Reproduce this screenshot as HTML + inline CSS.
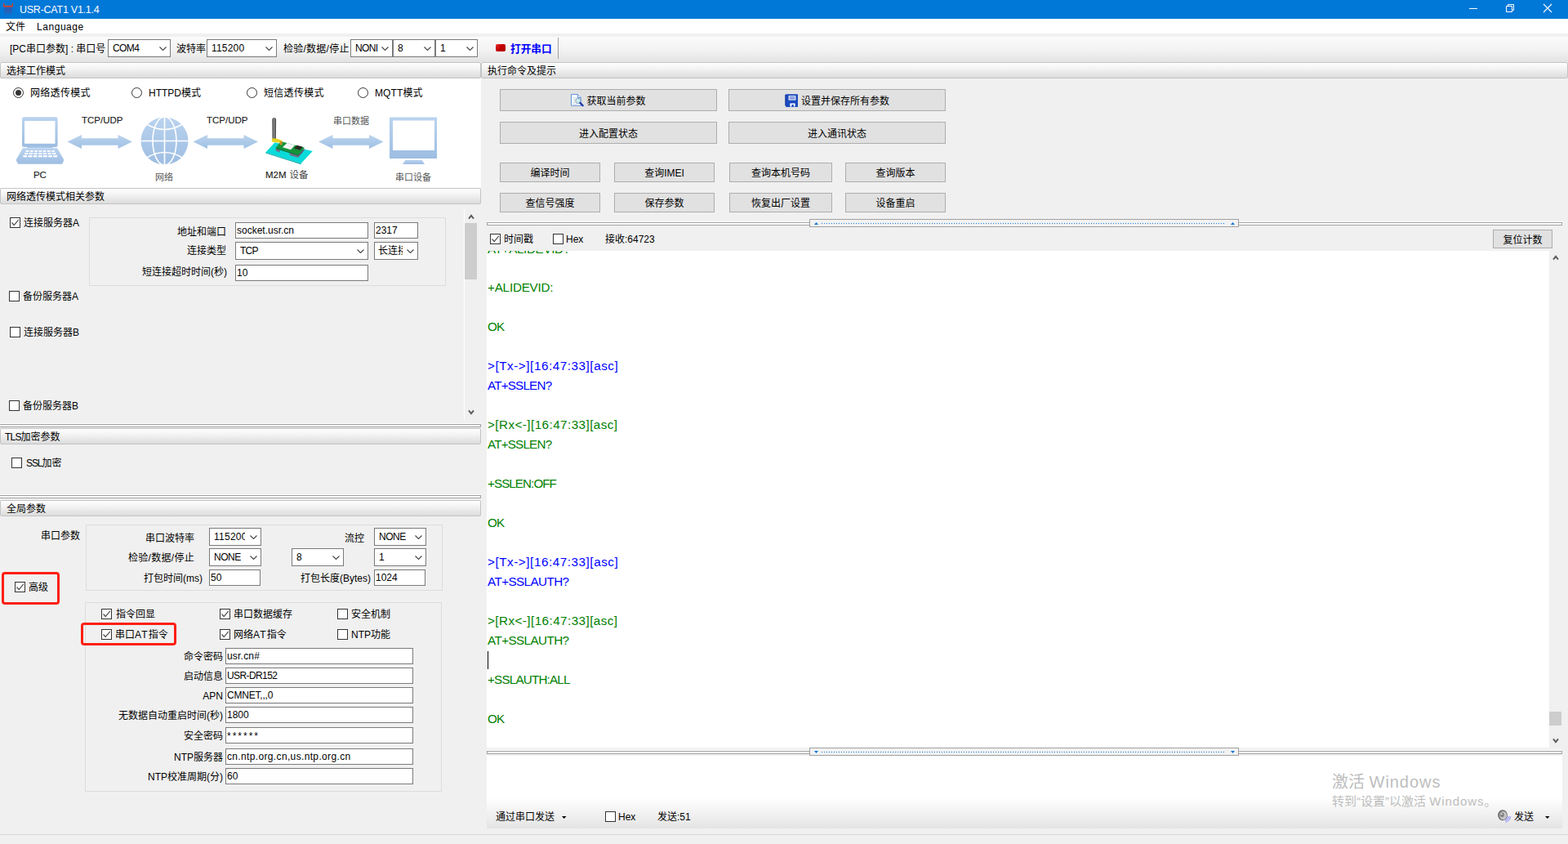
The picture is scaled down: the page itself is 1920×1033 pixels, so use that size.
<!DOCTYPE html>
<html><head><meta charset="utf-8">
<style>
*{box-sizing:border-box}
html,body{margin:0;padding:0}
body{width:1920px;height:1033px;background:#f0f0f0;position:relative;overflow:hidden;font:12px/14px "Liberation Sans","Noto Sans CJK SC",sans-serif;color:#000}
.a{position:absolute;white-space:nowrap}
.hdr{position:absolute;height:20px;border:1px solid #c4c4c4;border-radius:2px;background:linear-gradient(#fefefe,#f3f3f3 40%,#dcdcdc);padding:3px 0 0 7px;line-height:14px}
.inp{position:absolute;background:#fff;border:1px solid #7a7a7a;height:20px;line-height:19px;padding-left:1px;white-space:nowrap;overflow:hidden}
.sel{position:absolute;background:#fff;border:1px solid #7a7a7a;height:22px;line-height:21px;padding-left:5px;white-space:nowrap;overflow:hidden}
.sel svg.v{position:absolute;right:4px;top:8px}
.cb{position:absolute;width:13px;height:13px;border:1px solid #333;background:#fff}
.cb svg{position:absolute;left:0;top:0}
.rd{position:absolute;width:13px;height:13px;border:1px solid #333;border-radius:50%;background:#fff}
.rd.on:after{content:"";position:absolute;left:2px;top:2px;width:7px;height:7px;border-radius:50%;background:#333}
.btn{position:absolute;background:#e1e1e1;border:1px solid #adadad;text-align:center;white-space:nowrap}
.gb{position:absolute;border:1px solid #dcdcdc}
.lr{position:absolute;text-align:right;white-space:nowrap}
.red{position:absolute;border:3px solid #ff1f12;border-radius:4px}
.log{position:absolute;left:597px;font:15.2px/24px "Liberation Sans",sans-serif;white-space:nowrap;letter-spacing:0.1px}
.g{color:#008000}.b{color:#0000ff}
.spl{position:absolute;height:4px;border:1px solid #a0a0a0;border-left:none;background:#fff;box-shadow:0 -1px 0 #fff}
</style></head><body>

<!-- TITLE -->
<div class="a" id="title" style="left:0;top:0;width:1920px;height:23px;background:#0078d7">
<svg class="a" style="left:3px;top:3px" width="15" height="16" viewBox="3 3 15 16"><path d="M4 4 H5.4 V6.8 H14.7 V4 H16 V7.5 Q16 8.8 14.7 8.8 H5.4 Q4 8.8 4 7.5 Z" fill="#c8452f"/><path d="M4.8 9.2 H15.2 L14.2 17.5 H12.6 V13.8 H11 V17.5 H9 V13.8 H7.6 V17.5 H6 Z" fill="#2a5db5"/></svg>
<div class="a" style="left:24px;top:5px;color:#fff;font-size:12.5px;line-height:15px;letter-spacing:-0.25px">USR-CAT1 V1.1.4</div>
<svg class="a" style="left:1798px;top:4px" width="110" height="14" viewBox="0 0 110 14"><path d="M1 6.5 H11" stroke="#fff" stroke-width="1"/><path d="M46.5 3.5 H53.5 V10.5 H46.5 Z M48.5 3.5 V1.5 H55.5 V8.5 H53.5" fill="none" stroke="#fff" stroke-width="1"/><path d="M92 1 L102 11 M102 1 L92 11" stroke="#fff" stroke-width="1.1"/></svg>
</div>
<!-- MENU -->
<div class="a" id="menu" style="left:0;top:23px;width:1920px;height:18px;background:#fff">
<div class="a" style="left:7px;top:3px">文件</div><div class="a" style="left:45px;top:3px;letter-spacing:0.55px">Language</div></div>
<!-- TOOLBAR -->
<div class="a" id="tb" style="left:0;top:45px;width:1920px;height:31px;background:linear-gradient(#fbfbfb,#f3f3f3 50%,#e3e3e3)">
<div class="a" style="left:12px;top:8px">[PC串口参数] : 串口号</div>
<div class="sel" style="left:132px;top:3px;width:77px;letter-spacing:-0.6px">COM4<svg class="v" width="9" height="5" viewBox="0 0 9 5"><path d="M0.5 0.5 L4.5 4.5 L8.5 0.5" fill="none" stroke="#444" stroke-width="1.1"/></svg></div>
<div class="a" style="left:216px;top:8px">波特率</div>
<div class="sel" style="left:253px;top:3px;width:86px;letter-spacing:0.2px">115200<svg class="v" width="9" height="5" viewBox="0 0 9 5"><path d="M0.5 0.5 L4.5 4.5 L8.5 0.5" fill="none" stroke="#444" stroke-width="1.1"/></svg></div>
<div class="a" style="left:347px;top:8px;letter-spacing:0.25px">检验/数据/停止</div>
<div class="sel" style="left:429px;top:3px;width:52px;letter-spacing:-0.6px">NONI<svg class="v" width="9" height="5" viewBox="0 0 9 5"><path d="M0.5 0.5 L4.5 4.5 L8.5 0.5" fill="none" stroke="#444" stroke-width="1.1"/></svg></div>
<div class="sel" style="left:481px;top:3px;width:52px">8<svg class="v" width="9" height="5" viewBox="0 0 9 5"><path d="M0.5 0.5 L4.5 4.5 L8.5 0.5" fill="none" stroke="#444" stroke-width="1.1"/></svg></div>
<div class="sel" style="left:533px;top:3px;width:52px">1<svg class="v" width="9" height="5" viewBox="0 0 9 5"><path d="M0.5 0.5 L4.5 4.5 L8.5 0.5" fill="none" stroke="#444" stroke-width="1.1"/></svg></div>
<div class="a" style="left:607px;top:9px;width:12px;height:9px;border-radius:2px;background:linear-gradient(135deg,#e83030,#c00000 50%,#b00000)"></div>
<div class="a bd" style="left:625px;top:8px;color:#0000ff;font-weight:bold;font-size:12.7px">打开串口</div>
<div class="a" style="left:683px;top:1px;width:1px;height:26px;background:#a0a0a0"></div>
</div>
<!-- LEFT -->
<div id="left">
<div class="hdr" style="left:0;top:76px;width:589px">选择工作模式</div>
<div class="a" style="left:0;top:96px;width:589px;height:134px;background:#fff"></div>
<div class="rd on" style="left:16px;top:107px"></div><div class="a" style="left:37px;top:107px;letter-spacing:0.3px">网络透传模式</div>
<div class="rd" style="left:161px;top:107px"></div><div class="a" style="left:182px;top:107px;letter-spacing:0px">HTTPD模式</div>
<div class="rd" style="left:302px;top:107px"></div><div class="a" style="left:323px;top:107px;letter-spacing:0.3px">短信透传模式</div>
<div class="rd" style="left:438px;top:107px"></div><div class="a" style="left:459px;top:107px;letter-spacing:0.1px">MQTT模式</div>
<svg class="a" id="dia" style="left:0;top:136px" width="589" height="94" viewBox="0 136 589 94"><defs><linearGradient id="ag" x1="0" y1="0" x2="0" y2="1"><stop offset="0" stop-color="#bcd4ee"/><stop offset="1" stop-color="#9fc0e4"/></linearGradient><linearGradient id="bg" x1="0" y1="0" x2="0" y2="1"><stop offset="0" stop-color="#bad3ef"/><stop offset="1" stop-color="#9dbde2"/></linearGradient></defs><path fill="url(#bg)" d="M29.5 143.3 H68.1 Q70.6 143.3 70.6 145.8 V177.4 Q70.6 179.9 68.1 179.9 H29.5 Q27 179.9 27 177.4 V145.8 Q27 143.3 29.5 143.3 Z"/><rect x="30" y="148" width="37.5" height="27.8" fill="#fff"/><path fill="url(#bg)" d="M33 179.9 H65 V181.2 H33 Z"/><path fill="url(#bg)" d="M27.9 181.2 H70.1 L78 195.1 V197 L76.2 200.8 H22.2 L20 197 V195.1 Z"/><rect x="31.5" y="184.2" width="3.8" height="1.8" fill="#fff"/><rect x="36.8" y="184.2" width="3.8" height="1.8" fill="#fff"/><rect x="42.1" y="184.2" width="3.8" height="1.8" fill="#fff"/><rect x="47.4" y="184.2" width="3.8" height="1.8" fill="#fff"/><rect x="52.6" y="184.2" width="3.8" height="1.8" fill="#fff"/><rect x="57.9" y="184.2" width="3.8" height="1.8" fill="#fff"/><rect x="63.2" y="184.2" width="3.8" height="1.8" fill="#fff"/><rect x="30.1" y="187.0" width="4.2" height="2.0" fill="#fff"/><rect x="35.8" y="187.0" width="4.2" height="2.0" fill="#fff"/><rect x="41.4" y="187.0" width="4.2" height="2.0" fill="#fff"/><rect x="47.1" y="187.0" width="4.2" height="2.0" fill="#fff"/><rect x="52.8" y="187.0" width="4.2" height="2.0" fill="#fff"/><rect x="58.5" y="187.0" width="4.2" height="2.0" fill="#fff"/><rect x="64.1" y="187.0" width="4.2" height="2.0" fill="#fff"/><rect x="28.4" y="190.0" width="4.7" height="2.4" fill="#fff"/><rect x="34.6" y="190.0" width="4.7" height="2.4" fill="#fff"/><rect x="40.7" y="190.0" width="4.7" height="2.4" fill="#fff"/><rect x="46.9" y="190.0" width="4.7" height="2.4" fill="#fff"/><rect x="53.0" y="190.0" width="4.7" height="2.4" fill="#fff"/><rect x="59.2" y="190.0" width="4.7" height="2.4" fill="#fff"/><rect x="65.3" y="190.0" width="4.7" height="2.4" fill="#fff"/><path fill="url(#ag)" d="M82.5 173.5 L100 165 L100 169.3 L144.5 169.3 L144.5 165 L162 173.5 L144.5 182 L144.5 177.7 L100 177.7 L100 182 Z"/><path fill="url(#ag)" d="M236.5 173.5 L254 165 L254 169.3 L298.5 169.3 L298.5 165 L316 173.5 L298.5 182 L298.5 177.7 L254 177.7 L254 182 Z"/><path fill="url(#ag)" d="M390 173.5 L407.5 165 L407.5 169.3 L452 169.3 L452 165 L469.5 173.5 L452 182 L452 177.7 L407.5 177.7 L407.5 182 Z"/><circle cx="201.5" cy="172.5" r="29" fill="url(#bg)"/><g fill="none" stroke="#fff" stroke-width="1.6"><path d="M201.5 143.5 V201.5 M172.5 172.5 H230.5"/><ellipse cx="201.5" cy="172.5" rx="14.5" ry="29.5"/><path d="M180.5 152.5 Q201.5 164.5 222.5 152.5 M180.5 192.5 Q201.5 180.5 222.5 192.5"/></g><defs><linearGradient id="an" x1="0" y1="0" x2="1" y2="0"><stop offset="0" stop-color="#444"/><stop offset="0.5" stop-color="#8a8a8a"/><stop offset="1" stop-color="#3c3c3c"/></linearGradient></defs><path d="M325.3 186.4 L336.5 174.2 L382.8 185.1 L368.6 200 Z" fill="#0adada"/><path d="M325.3 186.4 L368.6 200 L368.6 201.2 L325.3 187.6 Z" fill="#08a8a8"/><path d="M337.8 181 L342.7 182.6 L342.7 186.4 L337.8 184.8 Z" fill="#70708c"/><path d="M354.7 186.6 L364.9 189.6 L364.9 193 L354.7 190 Z" fill="#70708c"/><path d="M364.9 189.6 L372.5 181.5 L372.5 184 L364.9 193 Z" fill="#5a5a78"/><path d="M337.8 180.7 L343.8 172.9 L373 180.7 L365.1 189.4 Z" fill="#14943a"/><path d="M337.8 180.7 L365.1 189.4 L365.1 190.6 L337.8 181.9 Z" fill="#0c6a28"/><path d="M345.9 180.3 L351.6 175 L361.2 177.7 L356 183.3 Z" fill="#f6f6f6"/><path d="M359.9 181.6 L363.8 177.7 L370.8 179.8 L367.3 183.75 Z" fill="#2a2a22"/><path d="M333.3 146 Q333.3 144 335.7 144 Q338.1 144 338.1 146 L337.9 171.5 L333.5 171.5 Z" fill="url(#an)"/><path d="M332.9 169.6 L338.5 169.6 L345.5 172 L345.5 174.4 L338 174.2 L332.9 173.6 Z" fill="#e6d422"/><rect x="342.7" y="173" width="2.8" height="4.4" fill="#d08a28"/><rect x="477" y="143.5" width="58" height="50.5" fill="url(#bg)"/><rect x="481" y="147.5" width="51" height="36.5" fill="#fff"/><path d="M496.5 195.8 H516.5 L520 201 H493 Z" fill="url(#bg)"/><g font-family="Liberation Sans, sans-serif" fill="#1a1a1a" stroke="#1a1a1a" stroke-width="0.12" font-size="11.5"><text x="100" y="150.8">TCP/UDP</text><text x="253" y="150.8">TCP/UDP</text><text x="40.9" y="218">PC</text><text x="325" y="217.7">M2M</text></g><g font-family="'Liberation Sans', 'Noto Sans CJK SC', sans-serif" fill="#555" font-size="11"><text x="408" y="151.8">串口数据</text><text x="190" y="220.8">网络</text><text x="354.5" y="217.9" font-size="11.5" fill="#444">设备</text><text x="484" y="220.8">串口设备</text></g></svg>
<div class="hdr" style="left:0;top:230px;width:589px">网络透传模式相关参数</div>
<div class="cb" style="left:12px;top:266px"><svg width="11" height="11" viewBox="0 0 11 11"><path d="M1.5 5.5 L4.2 8.5 L9.8 1.8" fill="none" stroke="#4a4a4a" stroke-width="1.15"/></svg></div><div class="a" style="left:29px;top:266px">连接服务器A</div>

<div class="gb" style="left:109px;top:266px;width:437px;height:84px"></div>
<div class="lr" style="left:150px;width:127px;top:277px">地址和端口</div>
<div class="lr" style="left:150px;width:127px;top:300px">连接类型</div>
<div class="lr" style="left:150px;width:128px;top:326px">短连接超时时间(秒)</div>
<div class="inp" style="left:288px;top:272px;width:163px">socket.usr.cn</div>
<div class="inp" style="left:458px;top:272px;width:54px">2317</div>
<div class="sel" style="left:288px;top:296px;width:163px;letter-spacing:-0.8px">TCP<svg class="v" width="9" height="5" viewBox="0 0 9 5"><path d="M0.5 0.5 L4.5 4.5 L8.5 0.5" fill="none" stroke="#444" stroke-width="1.1"/></svg></div>
<div class="sel" style="left:458px;top:296px;width:54px;padding-left:4px"><span style="display:inline-block;width:30px;overflow:hidden;vertical-align:top">长连接</span><svg class="v" width="9" height="5" viewBox="0 0 9 5"><path d="M0.5 0.5 L4.5 4.5 L8.5 0.5" fill="none" stroke="#444" stroke-width="1.1"/></svg></div>
<div class="inp" style="left:288px;top:324px;width:163px">10</div>
<div class="cb" style="left:11px;top:356px"></div><div class="a" style="left:28px;top:356px">备份服务器A</div>

<div class="cb" style="left:12px;top:400px"></div><div class="a" style="left:29px;top:400px">连接服务器B</div>

<div class="cb" style="left:11px;top:490px"></div><div class="a" style="left:28px;top:490px">备份服务器B</div>

<div class="a" style="left:568px;top:256px;width:1px;height:258px;background:#fff"></div>
<div class="a" style="left:569px;top:273px;width:15px;height:69px;background:#cdcdcd"></div>
<svg class="a" style="left:571.6px;top:260.5px" width="10" height="8" viewBox="0 0 10 8"><path d="M2 6.6 L5 2.8 L8 6.6" fill="none" stroke="#5a5a5a" stroke-width="1.9"/></svg>
<svg class="a" style="left:571.6px;top:501.1px" width="10" height="8" viewBox="0 0 10 8"><path d="M2 1.4 L5 5.2 L8 1.4" fill="none" stroke="#5a5a5a" stroke-width="1.9"/></svg>
<div class="spl" style="left:0;top:519px;width:589px"></div>
<div class="hdr" style="left:0;top:524px;width:589px;padding-left:5px"><span style="letter-spacing:-0.8px">TLS</span>加密参数</div>
<div class="cb" style="left:14px;top:560px"></div><div class="a" style="left:32px;top:560px"><span style="letter-spacing:-1.1px">SSL</span>加密</div>

<div class="spl" style="left:0;top:606px;width:589px"></div>
<div class="hdr" style="left:0;top:612px;width:589px">全局参数</div>
<div class="a" style="left:50px;top:649px">串口参数</div>
<div class="gb" style="left:105px;top:642px;width:437px;height:81px"></div>
<div class="lr" style="left:130px;width:108px;top:652px">串口波特率</div>
<div class="sel" style="left:256px;top:646px;width:64px"><span style="display:inline-block;width:38px;overflow:hidden;vertical-align:top;letter-spacing:0.25px">115200</span><svg class="v" width="9" height="5" viewBox="0 0 9 5"><path d="M0.5 0.5 L4.5 4.5 L8.5 0.5" fill="none" stroke="#444" stroke-width="1.1"/></svg></div>
<div class="a" style="left:422px;top:652px">流控</div>
<div class="sel" style="left:458px;top:646px;width:64px;letter-spacing:-0.5px">NONE<svg class="v" width="9" height="5" viewBox="0 0 9 5"><path d="M0.5 0.5 L4.5 4.5 L8.5 0.5" fill="none" stroke="#444" stroke-width="1.1"/></svg></div>
<div class="lr" style="left:130px;width:108px;top:676px;letter-spacing:0.3px">检验/数据/停止</div>
<div class="sel" style="left:256px;top:671px;width:64px;letter-spacing:-0.5px">NONE<svg class="v" width="9" height="5" viewBox="0 0 9 5"><path d="M0.5 0.5 L4.5 4.5 L8.5 0.5" fill="none" stroke="#444" stroke-width="1.1"/></svg></div>
<div class="sel" style="left:357px;top:671px;width:64px">8<svg class="v" width="9" height="5" viewBox="0 0 9 5"><path d="M0.5 0.5 L4.5 4.5 L8.5 0.5" fill="none" stroke="#444" stroke-width="1.1"/></svg></div>
<div class="sel" style="left:458px;top:671px;width:64px">1<svg class="v" width="9" height="5" viewBox="0 0 9 5"><path d="M0.5 0.5 L4.5 4.5 L8.5 0.5" fill="none" stroke="#444" stroke-width="1.1"/></svg></div>
<div class="lr" style="left:130px;width:118px;top:701px">打包时间(ms)</div>
<div class="inp" style="left:256px;top:697px;width:63px">50</div>
<div class="lr" style="left:340px;width:114px;top:701px">打包长度(Bytes)</div>
<div class="inp" style="left:458px;top:697px;width:63px">1024</div>
<div class="red" style="left:2px;top:700px;width:71px;height:40px"></div>
<div class="cb" style="left:18px;top:712px"><svg width="11" height="11" viewBox="0 0 11 11"><path d="M1.5 5.5 L4.2 8.5 L9.8 1.8" fill="none" stroke="#4a4a4a" stroke-width="1.15"/></svg></div><div class="a" style="left:35px;top:712px">高级</div>

<div class="gb" style="left:104px;top:737px;width:437px;height:232px"></div>
<div class="cb" style="left:124px;top:745px"><svg width="11" height="11" viewBox="0 0 11 11"><path d="M1.5 5.5 L4.2 8.5 L9.8 1.8" fill="none" stroke="#4a4a4a" stroke-width="1.15"/></svg></div><div class="a" style="left:142px;top:745px">指令回显</div>

<div class="cb" style="left:269px;top:745px"><svg width="11" height="11" viewBox="0 0 11 11"><path d="M1.5 5.5 L4.2 8.5 L9.8 1.8" fill="none" stroke="#4a4a4a" stroke-width="1.15"/></svg></div><div class="a" style="left:286px;top:745px">串口数据缓存</div>

<div class="cb" style="left:413px;top:745px"></div><div class="a" style="left:430px;top:745px">安全机制</div>

<div class="cb" style="left:124px;top:770px"><svg width="11" height="11" viewBox="0 0 11 11"><path d="M1.5 5.5 L4.2 8.5 L9.8 1.8" fill="none" stroke="#4a4a4a" stroke-width="1.15"/></svg></div><div class="a" style="left:141px;top:770px">串口<span style="letter-spacing:1.1px">AT</span>指令</div>

<div class="cb" style="left:269px;top:770px"><svg width="11" height="11" viewBox="0 0 11 11"><path d="M1.5 5.5 L4.2 8.5 L9.8 1.8" fill="none" stroke="#4a4a4a" stroke-width="1.15"/></svg></div><div class="a" style="left:286px;top:770px">网络<span style="letter-spacing:1.1px">AT</span>指令</div>

<div class="cb" style="left:413px;top:770px"></div><div class="a" style="left:430px;top:770px">NTP功能</div>

<div class="red" style="left:99px;top:762px;width:117px;height:28px"></div>
<div class="lr" style="left:110px;width:163px;top:797px">命令密码</div>
<div class="inp" style="left:276px;top:793px;width:230px;letter-spacing:0.2px">usr.cn#</div>
<div class="lr" style="left:110px;width:163px;top:821px">启动信息</div>
<div class="inp" style="left:276px;top:817px;width:230px;letter-spacing:-0.6px">USR-DR152</div>
<div class="lr" style="left:110px;width:163px;top:845px">APN</div>
<div class="inp" style="left:276px;top:841px;width:230px;letter-spacing:-0.2px">CMNET,,,0</div>
<div class="lr" style="left:110px;width:163px;top:869px">无数据自动重启时间(秒)</div>
<div class="inp" style="left:276px;top:865px;width:230px">1800</div>
<div class="lr" style="left:110px;width:163px;top:894px">安全密码</div>
<div class="inp" style="left:276px;top:890px;width:230px;letter-spacing:2px;line-height:21px">******</div>
<div class="lr" style="left:110px;width:163px;top:920px">NTP服务器</div>
<div class="inp" style="left:276px;top:916px;width:230px;letter-spacing:0.35px">cn.ntp.org.cn,us.ntp.org.cn</div>
<div class="lr" style="left:110px;width:163px;top:944px">NTP校准周期(分)</div>
<div class="inp" style="left:276px;top:940px;width:230px">60</div>
<div class="a" style="left:0;top:1021px;width:1920px;height:1px;background:#d7d7d7"></div>
</div>
<!-- RIGHT -->
<div id="right">
<div class="hdr" style="left:589px;top:76px;width:1331px">执行命令及提示</div>
<div class="btn" style="left:612px;top:109px;width:266px;height:27px;line-height:25px;padding-top:2px"><svg style="vertical-align:-3px;margin-right:3px" width="16" height="16" viewBox="0 0 16 16"><path d="M0.5 0.5 H8.3 L12.3 4.5 V14.3 H0.5 Z" fill="#fcfdff" stroke="#5f93da" stroke-width="1"/><path d="M8.3 0.5 V4.5 H12.3" fill="#dce9fb" stroke="#5f93da" stroke-width="1"/><path d="M2.5 4.5 H6.5 M2.5 6.5 H6 M2.5 8.5 H5 M2.5 10.5 H5.5 M2.5 12.5 H8" stroke="#d4d9e0" stroke-width="1"/><circle cx="8.8" cy="8.4" r="3" fill="#c6f0f6" stroke="#9fb2c2" stroke-width="1.2"/><path d="M11.5 11 L14.6 14.2" stroke="#1b36a2" stroke-width="2.3" stroke-linecap="round"/></svg>获取当前参数</div>
<div class="btn" style="left:892px;top:109px;width:266px;height:27px;line-height:25px;padding-top:2px"><svg style="vertical-align:-3px;margin-right:4px" width="16" height="16" viewBox="0 0 16 16"><path d="M0.3 0.8 H2 V15.8 L0.3 14 Z" fill="#0d2e90"/><rect x="1.3" y="0.2" width="14.7" height="15.8" rx="0.8" fill="#1b4ac0"/><rect x="4.6" y="2.2" width="8.8" height="5.4" fill="#fff"/><path d="M5.6 3.9 H12.4 M5.6 5.9 H12.4" stroke="#1b4ac0" stroke-width="1"/><path d="M6.4 15.6 V11.6 H12.6 V15.6 H10.8 V13 H8.4 V15.6 Z" fill="#fff"/></svg>设置并保存所有参数</div>
<div class="btn" style="left:612px;top:149px;width:266px;height:27px;line-height:25px;padding-top:2px">进入配置状态</div>
<div class="btn" style="left:892px;top:149px;width:266px;height:27px;line-height:25px;padding-top:2px">进入通讯状态</div>
<div class="btn" style="left:612px;top:199px;width:123px;height:24px;line-height:22px;padding-top:1px">编译时间</div>
<div class="btn" style="left:752px;top:199px;width:123px;height:24px;line-height:22px;padding-top:1px">查询IMEI</div>
<div class="btn" style="left:893px;top:199px;width:126px;height:24px;line-height:22px;padding-top:1px">查询本机号码</div>
<div class="btn" style="left:1035px;top:199px;width:123px;height:24px;line-height:22px;padding-top:1px">查询版本</div>
<div class="btn" style="left:612px;top:236px;width:123px;height:24px;line-height:22px;padding-top:1px">查信号强度</div>
<div class="btn" style="left:752px;top:236px;width:123px;height:24px;line-height:22px;padding-top:1px">保存参数</div>
<div class="btn" style="left:893px;top:236px;width:126px;height:24px;line-height:22px;padding-top:1px">恢复出厂设置</div>
<div class="btn" style="left:1035px;top:236px;width:123px;height:24px;line-height:22px;padding-top:1px">设备重启</div>
<div class="spl" style="left:596px;top:272px;width:1317px;border-left:1px solid #a0a0a0"></div>
<div class="a" style="left:991px;top:268px;width:526px;height:10px;background:#f2f2f2;border:1px solid #a0a0a0"></div>
<div class="a" style="left:1006px;top:273px;width:494px;height:1px;background:repeating-linear-gradient(90deg,#1378d8 0 1px,transparent 1px 3px)"></div>
<svg class="a" style="left:997px;top:272px" width="5" height="3" viewBox="0 0 5 3"><path d="M0 3 L2.5 0 L5 3 Z" fill="#0f74d4"/></svg>
<svg class="a" style="left:1507px;top:272px" width="5" height="3" viewBox="0 0 5 3"><path d="M0 3 L2.5 0 L5 3 Z" fill="#0f74d4"/></svg>
<div class="cb" style="left:600px;top:286px"><svg width="11" height="11" viewBox="0 0 11 11"><path d="M1.5 5.5 L4.2 8.5 L9.8 1.8" fill="none" stroke="#4a4a4a" stroke-width="1.15"/></svg></div><div class="a" style="left:617px;top:286px">时间戳</div>
<div class="cb" style="left:677px;top:286px"></div><div class="a" style="left:693px;top:286px">Hex</div>
<div class="a" style="left:741px;top:286px">接收:64723</div>
<div class="btn" style="left:1828px;top:281px;width:73px;height:23px;line-height:21px;padding-top:2px">复位计数</div>
<div class="a" style="left:596px;top:307px;width:1301px;height:608px;background:#fff;overflow:hidden" id="logbox"><div class="log g" style="left:1px;top:-14px;letter-spacing:-0.33px">AT+ALIDEVID?</div><div class="log g" style="left:1px;top:33px;letter-spacing:-0.19px">+ALIDEVID:</div><div class="log g" style="left:1px;top:81px;letter-spacing:-0.86px">OK</div><div class="log b" style="left:1px;top:129px;letter-spacing:0.57px">&gt;[Tx-&gt;][16:47:33][asc]</div><div class="log b" style="left:1px;top:153px;letter-spacing:-0.79px">AT+SSLEN?</div><div class="log g" style="left:1px;top:201px;letter-spacing:0.46px">&gt;[Rx&lt;-][16:47:33][asc]</div><div class="log g" style="left:1px;top:225px;letter-spacing:-0.79px">AT+SSLEN?</div><div class="log g" style="left:1px;top:273px;letter-spacing:-0.93px">+SSLEN:OFF</div><div class="log g" style="left:1px;top:321px;letter-spacing:-0.86px">OK</div><div class="log b" style="left:1px;top:369px;letter-spacing:0.57px">&gt;[Tx-&gt;][16:47:33][asc]</div><div class="log b" style="left:1px;top:393px;letter-spacing:-0.56px">AT+SSLAUTH?</div><div class="log g" style="left:1px;top:441px;letter-spacing:0.46px">&gt;[Rx&lt;-][16:47:33][asc]</div><div class="log g" style="left:1px;top:465px;letter-spacing:-0.56px">AT+SSLAUTH?</div><div class="log g" style="left:1px;top:513px;letter-spacing:-0.79px">+SSLAUTH:ALL</div><div class="log g" style="left:1px;top:561px;letter-spacing:-0.86px">OK</div><div class="a" style="left:1px;top:490px;width:1px;height:22px;background:#000"></div></div>
<div class="a" style="left:1897px;top:307px;width:17px;height:608px;background:#f0f0f0"></div>
<div class="a" style="left:1897px;top:871px;width:15px;height:17px;background:#cdcdcd"></div>
<svg class="a" style="left:1899.5px;top:311.3px" width="10" height="8" viewBox="0 0 10 8"><path d="M2 6.6 L5 2.8 L8 6.6" fill="none" stroke="#5a5a5a" stroke-width="1.9"/></svg>
<svg class="a" style="left:1899.6px;top:902.8px" width="10" height="8" viewBox="0 0 10 8"><path d="M2 1.4 L5 5.2 L8 1.4" fill="none" stroke="#5a5a5a" stroke-width="1.9"/></svg>
<div class="a" style="left:596px;top:915px;width:1317px;height:99px;background:linear-gradient(#fff,#fff 62%,#e4e4e4)"></div>
<div class="a" style="left:596px;top:915px;width:1317px;height:10px;background:#f1f1f1"></div>
<div class="spl" style="left:596px;top:919px;width:1317px;border-left:1px solid #a0a0a0"></div>
<div class="a" style="left:991px;top:915px;width:526px;height:10px;background:#f2f2f2;border:1px solid #a0a0a0"></div>
<div class="a" style="left:1006px;top:920px;width:494px;height:1px;background:repeating-linear-gradient(90deg,#1378d8 0 1px,transparent 1px 3px)"></div>
<svg class="a" style="left:997px;top:919px" width="5" height="3" viewBox="0 0 5 3"><path d="M0 0 L5 0 L2.5 3 Z" fill="#0f74d4"/></svg>
<svg class="a" style="left:1507px;top:919px" width="5" height="3" viewBox="0 0 5 3"><path d="M0 0 L5 0 L2.5 3 Z" fill="#0f74d4"/></svg>
<div class="a" style="left:1631px;top:945px;font-size:20px;line-height:24px;color:#bdbdbd">激活 <span style="letter-spacing:0.95px">Windows</span></div>
<div class="a" style="left:1631px;top:972px;font-size:15px;line-height:18px;color:#bdbdbd">转到“设置”以激活 <span style="letter-spacing:0.9px">Windows</span>。</div>
<div class="a" style="left:607px;top:993px">通过串口发送</div>
<svg class="a" style="left:688px;top:999px" width="6" height="3" viewBox="0 0 6 3"><path d="M0 0 L5.5 0 L2.75 3 Z" fill="#000"/></svg>
<div class="cb" style="left:741px;top:993px"></div><div class="a" style="left:757px;top:993px">Hex</div>
<div class="a" style="left:805px;top:993px">发送:51</div>
<svg class="a" style="left:1834px;top:991px" width="17" height="17" viewBox="0 0 17 17"><ellipse cx="6" cy="6.7" rx="5.8" ry="6.5" fill="#666"/><ellipse cx="6.5" cy="7" rx="4.5" ry="5.2" fill="#c6c6c6"/><ellipse cx="5.3" cy="6.2" rx="2.4" ry="2.9" fill="#808080"/><circle cx="4.6" cy="5.2" r="1" fill="#e8e8e8"/><g fill="none" stroke="#8686ff" stroke-width="0.9"><path d="M9.6 15.6 Q14.6 13.8 16 8.5"/><path d="M9.2 14 Q13.2 12.4 14.5 8.2"/><path d="M8.8 12.4 Q11.8 11.2 13 8"/></g></svg>
<div class="a" style="left:1854px;top:993px">发送</div>
<svg class="a" style="left:1892px;top:999px" width="6" height="3" viewBox="0 0 6 3"><path d="M0 0 L5.5 0 L2.75 3 Z" fill="#000"/></svg>
</div>
</body></html>
